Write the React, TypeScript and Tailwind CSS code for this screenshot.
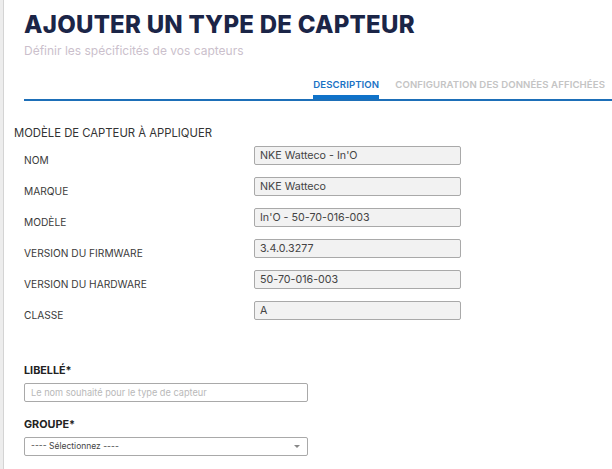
const rows = [
  { label: "NOM", value: "NKE Watteco - In'O" },
  { label: "MARQUE", value: "NKE Watteco" },
  { label: "MODÈLE", value: "In'O - 50-70-016-003" },
  { label: "VERSION DU FIRMWARE", value: "3.4.0.3277" },
  { label: "VERSION DU HARDWARE", value: "50-70-016-003" },
  { label: "CLASSE", value: "A" },
];

export default function App() {
  return (
    <div className="flex min-h-[469px] w-[612px] bg-white font-['Inter',sans-serif] text-[#333]">
      <div className="w-[4px] shrink-0 bg-[#ededed] border-r border-[#d4d4d4]" />
      <div className="flex-1 pl-[10px]">
        {/* header */}
        <div className="pl-[10px]">
          <h1 className="pt-[10px] text-[24px] leading-[29px] font-extrabold tracking-[0.25px] text-[#1b2547]">
            AJOUTER UN TYPE DE CAPTEUR
          </h1>
          <p className="mt-[4px] text-[12px] leading-[16px] text-[#cbbfcc]">
            Définir les spécificités de vos capteurs
          </p>
          <div className="mt-[20px] flex justify-end border-b-2 border-[#1d6fb8] pr-[7px]">
            <div className="flex gap-[16px] text-[9.6px] font-semibold tracking-[0.1px]">
              <div className="flex flex-col">
                <span className="leading-[12px] pb-[4px] text-[#1a72c4]">DESCRIPTION</span>
                <span className="h-[4px] bg-[#0f72c9]" />
              </div>
              <span className="leading-[12px] text-[#c4c4c4]">CONFIGURATION DES DONNÉES AFFICHÉES</span>
            </div>
          </div>
        </div>

        {/* model section */}
        <div className="mt-[25px] text-[11.3px] leading-[14px] text-[#333]">
          MODÈLE DE CAPTEUR À APPLIQUER
        </div>
        <div className="mt-[6px] flex flex-col gap-[12px] pl-[10px]">
          {rows.map((r) => (
            <div key={r.label} className="flex items-start h-[19px]">
              <span className="w-[230px] mt-[7px] leading-[14px] text-[10.2px] text-[#3a3a3a]">{r.label}</span>
              <div className="flex h-[19px] w-[207px] items-center rounded-[2px] border border-[#a9a9a9] bg-[#f2f2f2] px-[5px] pt-[1px] text-[10.7px] text-[#444]">
                {r.value}
              </div>
            </div>
          ))}
        </div>

        {/* form */}
        <div className="mt-[45px] pl-[10px]">
          <label className="block text-[10.8px] leading-[12px] font-bold text-[#222]">LIBELLÉ*</label>
          <div className="mt-[6px] flex h-[19px] w-[284px] items-center rounded-[2px] border border-[#a9a9a9] px-[6px] text-[9.2px] text-[#b9b9b9]">
            Le nom souhaité pour le type de capteur
          </div>
          <label className="mt-[17px] block text-[10.8px] leading-[12px] font-bold text-[#222]">GROUPE*</label>
          <div className="mt-[6px] flex h-[19px] w-[284px] items-center justify-between rounded-[2px] border border-[#a9a9a9] pl-[6px] pr-[7px] text-[8.5px] text-[#444]">
            <span>---- Sélectionnez ----</span>
            <span className="h-0 w-0 border-x-[3px] border-t-[3px] border-x-transparent border-t-[#888]" />
          </div>
        </div>
      </div>
    </div>
  );
}
